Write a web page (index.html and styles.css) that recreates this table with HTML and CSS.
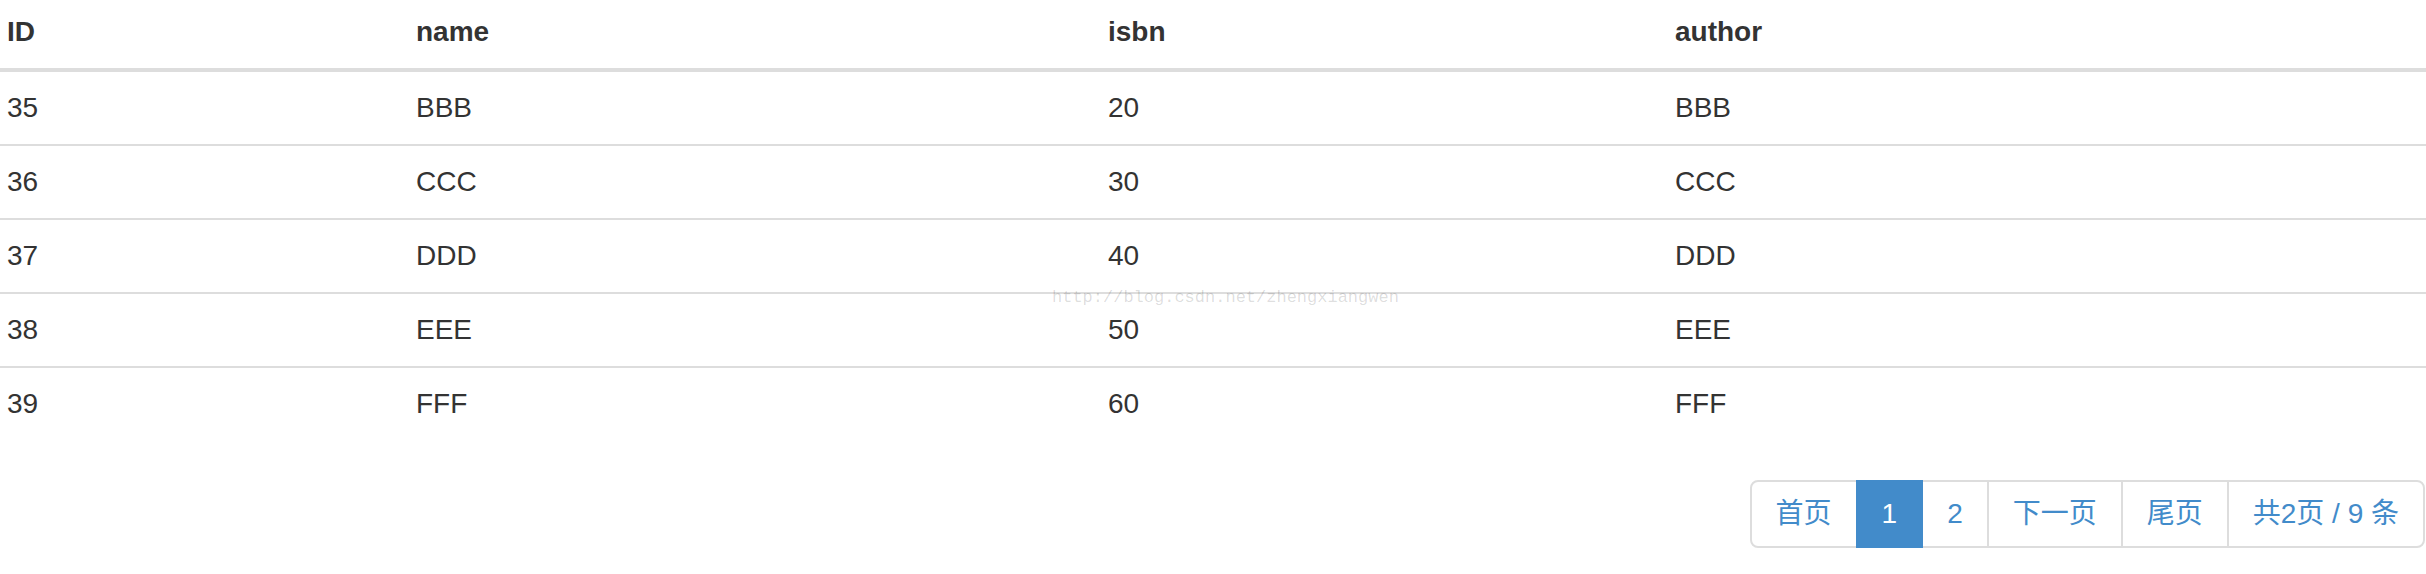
FILE: index.html
```html
<!DOCTYPE html>
<html lang="zh-CN">
<head>
<meta charset="utf-8">
<title>Books</title>
<link rel="stylesheet" href="styles.css">
</head>
<body>
<div class="page">
  <table class="book-table">
    <colgroup>
      <col class="col-id">
      <col class="col-name">
      <col class="col-isbn">
      <col class="col-author">
    </colgroup>
    <thead>
      <tr><th>ID</th><th>name</th><th>isbn</th><th>author</th></tr>
    </thead>
    <tbody>
      <tr><td>35</td><td>BBB</td><td>20</td><td>BBB</td></tr>
      <tr><td>36</td><td>CCC</td><td>30</td><td>CCC</td></tr>
      <tr><td>37</td><td>DDD</td><td>40</td><td>DDD</td></tr>
      <tr><td>38</td><td>EEE</td><td>50</td><td>EEE</td></tr>
      <tr><td>39</td><td>FFF</td><td>60</td><td>FFF</td></tr>
    </tbody>
  </table>
  <div class="pager-row">
    <ul class="pagination">
      <li><a href="#">首页</a></li>
      <li class="active"><a href="#">1</a></li>
      <li><a href="#">2</a></li>
      <li><a href="#">下一页</a></li>
      <li><a href="#">尾页</a></li>
      <li><a href="#">共2页 / 9 条</a></li>
    </ul>
  </div>
  <div class="watermark">http://blog.csdn.net/zhengxiangwen</div>
</div>
</body>
</html>
```

FILE: styles.css
```css
html, body {
  margin: 0;
  padding: 0;
  background: #fff;
  overflow: hidden;
}

.page {
  position: relative;
  font-family: "Liberation Sans", Arial, "Noto Sans CJK SC", sans-serif;
  font-size: 28px;
  line-height: 40px;
  color: #333;
}

.book-table {
  width: 100%;
  border-collapse: collapse;
  border-spacing: 0;
  table-layout: fixed;
}

.col-id { width: 409px; }
.col-name { width: 692px; }
.col-isbn { width: 567px; }
.col-author { width: 758px; }

.book-table th {
  text-align: left;
  font-weight: bold;
  padding: 12px 7px 16px;
  border-bottom: 4px solid #ddd;
}

.book-table td {
  padding: 16px 7px;
  border-top: 2px solid #ddd;
}

.book-table tbody tr:first-child td {
  border-top: 0;
}

.pager-row {
  display: flex;
  justify-content: flex-end;
  margin-top: 40px;
}

.pagination {
  display: flex;
  list-style: none;
  margin: 0 1px 0 0;
  padding: 0;
  font-family: "Liberation Sans", Arial, "Noto Sans CJK SC", sans-serif;
}

.pagination li {
  display: block;
  margin-left: -2px;
}

.pagination li:first-child {
  margin-left: 0;
}

.pagination a {
  display: block;
  padding: 12px 24px;
  line-height: 40px;
  color: #428bca;
  text-decoration: none;
  background: #fff;
  border: 2px solid #ddd;
}

.pagination li:first-child a {
  border-radius: 8px 0 0 8px;
}

.pagination li:last-child a {
  border-radius: 0 8px 8px 0;
}

.pagination .active a {
  position: relative;
  z-index: 2;
  color: #fff;
  background: #428bca;
  border-color: #428bca;
}

.watermark {
  position: absolute;
  left: 1052px;
  top: 288px;
  font-family: "Liberation Mono", "Courier New", monospace;
  font-size: 17px;
  line-height: 20px;
  color: rgba(0, 0, 0, 0.14);
  white-space: nowrap;
  pointer-events: none;
}
```
